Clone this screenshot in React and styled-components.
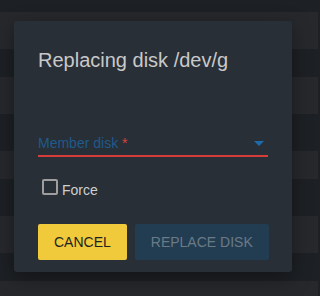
import styled, { createGlobalStyle } from "styled-components";

const GlobalStyle = createGlobalStyle`
    html, body {
        margin: 0;
        padding: 0;
        background: #1d2024;
        overflow: hidden;
    }
    * {
        box-sizing: border-box;
    }
`;

const Page = styled.div`
    position: relative;
    width: 318px;
    height: 296px;
    overflow: hidden;
    font-family: "Liberation Sans", Arial, sans-serif;
`;

const Table = styled.div`
    display: flex;
    flex-direction: column;
`;

const Row = styled.div`
    display: flex;
    justify-content: flex-end;
    height: ${({ $height }) => $height}px;
    padding: 12px 83px 0 0;
    background: ${({ $light }) => ($light ? "#26282c" : "#1d2024")};
    overflow: hidden;
`;

const Cell = styled.span`
    font-size: 14px;
    line-height: 20px;
    color: #9a9a9a;
`;

const Dialog = styled.div`
    position: absolute;
    left: 14px;
    top: 21px;
    width: 278px;
    display: flex;
    flex-direction: column;
    padding: 27px 24px 12px;
    background: #282f37;
    border-radius: 3px;
    box-shadow: 0 6px 20px rgba(0, 0, 0, 0.35);
`;

const Title = styled.h2`
    margin: 0;
    font-size: 20px;
    line-height: 24px;
    font-weight: 400;
    color: #c9c9c9;
`;

const Field = styled.div`
    display: flex;
    align-items: center;
    justify-content: space-between;
    margin-top: 61px;
    padding-bottom: 2px;
    border-bottom: 2px solid #d63d3a;
`;

const FieldLabel = styled.span`
    font-size: 14px;
    line-height: 20px;
    color: #1f5a8c;

    em {
        font-style: normal;
        color: #d9423c;
    }
`;

const Arrow = styled.svg`
    width: 10px;
    height: 5px;
    margin-right: 4px;
`;

const CheckRow = styled.label`
    display: flex;
    align-items: flex-start;
    gap: 4px;
    margin-top: 22px;
    padding-left: 4px;
`;

const Box = styled.span`
    width: 16px;
    height: 16px;
    border: 2px solid #9e9e9e;
    border-radius: 2px;
`;

const CheckText = styled.span`
    padding-top: 3px;
    font-size: 14px;
    line-height: 16px;
    color: #cfcfcf;
`;

const Actions = styled.div`
    display: flex;
    gap: 8px;
    margin-top: 26px;
`;

const Button = styled.button`
    flex: none;
    height: 36px;
    padding: 0 16px;
    border: 0;
    border-radius: 2px;
    font-family: inherit;
    font-size: 14px;
    white-space: nowrap;
    text-transform: uppercase;
    background: ${({ $primary }) => ($primary ? "#f0ca3b" : "#223d52")};
    color: ${({ $primary }) => ($primary ? "#1f1f1f" : "#6b7a86")};
    cursor: pointer;
`;

// background table rows: height, and whether the count cell peeks out from behind the dialog
const rows = [
    { h: 2 },
    { h: 37, count: "0" },
    { h: 28 },
    { h: 37 },
    { h: 37 },
    { h: 28 },
    { h: 37 },
    { h: 37 },
    { h: 28 },
    { h: 40, count: "0" },
];

const App = () => (
    <Page>
        <GlobalStyle />
        <Table>
            {rows.map((row, i) => (
                <Row key={i} $height={row.h} $light={i % 2 === 1}>
                    {row.count && <Cell>{row.count}</Cell>}
                </Row>
            ))}
        </Table>
        <Dialog>
            <Title>Replacing disk /dev/g</Title>
            <Field>
                <FieldLabel>
                    Member disk <em>*</em>
                </FieldLabel>
                <Arrow viewBox="0 0 10 5">
                    <path d="M0 0h10L5 5z" fill="#1e6bab" />
                </Arrow>
            </Field>
            <CheckRow>
                <Box />
                <CheckText>Force</CheckText>
            </CheckRow>
            <Actions>
                <Button $primary>Cancel</Button>
                <Button>Replace disk</Button>
            </Actions>
        </Dialog>
    </Page>
);

export default App;
